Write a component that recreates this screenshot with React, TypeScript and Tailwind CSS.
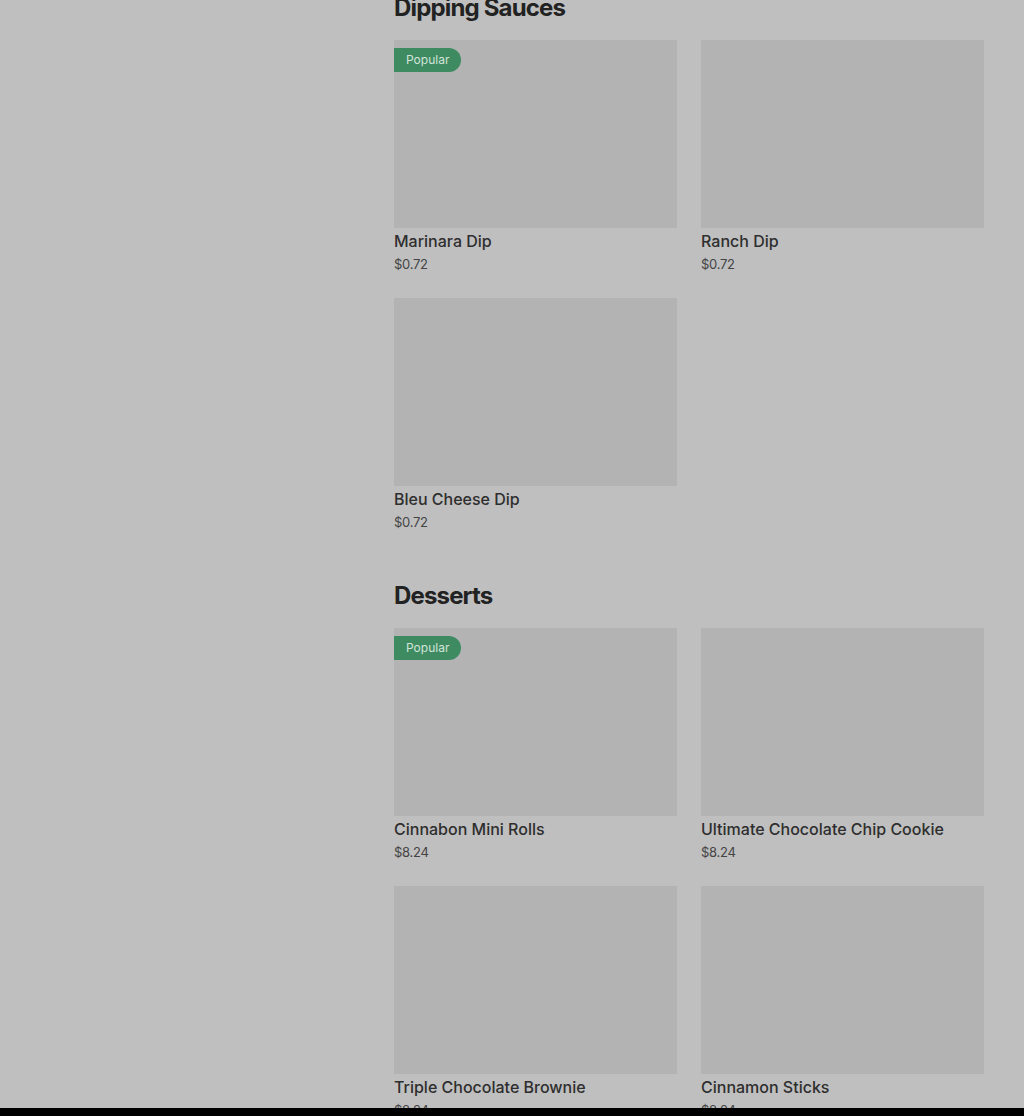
const sections = [
  {
    title: "Dipping Sauces",
    items: [
      { name: "Marinara Dip", price: "$0.72", popular: true },
      { name: "Ranch Dip", price: "$0.72" },
      { name: "Bleu Cheese Dip", price: "$0.72" },
    ],
  },
  {
    title: "Desserts",
    items: [
      { name: "Cinnabon Mini Rolls", price: "$8.24", popular: true },
      { name: "Ultimate Chocolate Chip Cookie", price: "$8.24" },
      { name: "Triple Chocolate Brownie", price: "$8.24" },
      { name: "Cinnamon Sticks", price: "$8.24" },
    ],
  },
];

type Item = { name: string; price: string; popular?: boolean };

function MenuCard({ item }: { item: Item }) {
  return (
    <div className="flex flex-col">
      <div className="relative h-[188px] bg-[#b3b3b3]">
        {item.popular && (
          <span className="absolute left-0 top-2 flex h-6 items-center rounded-r-full bg-[#3e8b62] px-3 text-xs text-[#d3e3d9]">
            Popular
          </span>
        )}
      </div>
      <div className="mt-px text-base leading-6 font-medium text-[#2e2e2e]">{item.name}</div>
      <div className="text-[13px] leading-[22px] tracking-[-0.02em] text-[#444]">{item.price}</div>
    </div>
  );
}

export default function App() {
  return (
    <div
      className="flex h-[1116px] flex-col overflow-hidden bg-[#bfbfbf]"
      style={{ fontFamily: "Inter, 'Noto Sans', sans-serif" }}
    >
      <div className="flex flex-1 overflow-hidden">
        <aside className="w-[394px] shrink-0" />
        <main className="mt-[-8px] w-[590px] flex-col">
          {sections.map((s) => (
            <section key={s.title} className="mb-[47px]">
              <h2 className="mb-4 text-2xl leading-8 font-bold tracking-[-0.035em] text-[#222]">{s.title}</h2>
              <div className="grid grid-cols-2 gap-x-6 gap-y-[23px]">
                {s.items.map((it) => (
                  <MenuCard key={it.name} item={it} />
                ))}
              </div>
            </section>
          ))}
        </main>
      </div>
      <div className="h-2 shrink-0 bg-black" />
    </div>
  );
}
